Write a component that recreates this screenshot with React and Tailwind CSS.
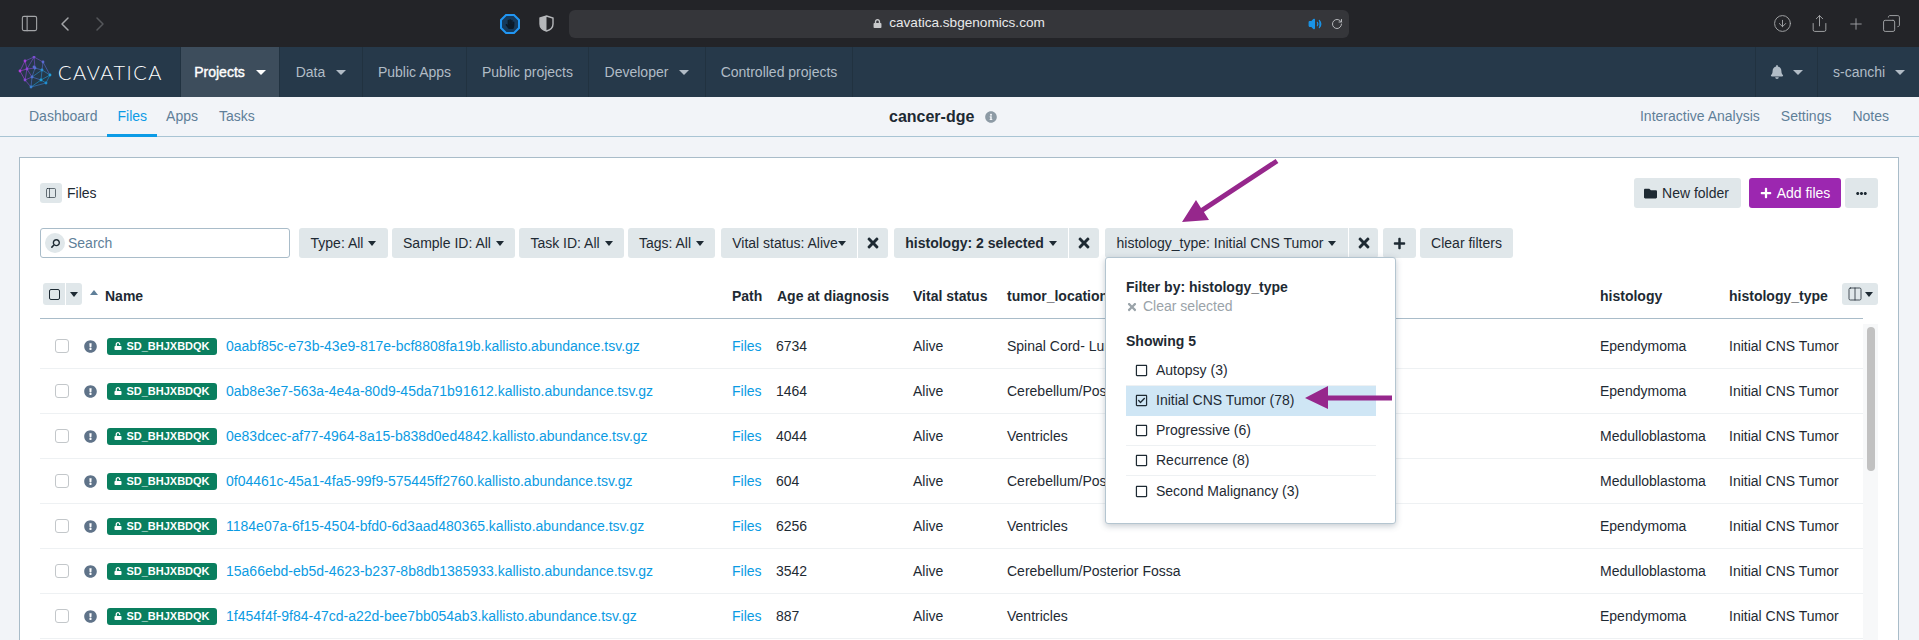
import React from "react";
import {
  FaBell,
  FaEllipsisH,
  FaExclamationCircle,
  FaFolder,
  FaHandPaper,
  FaInfoCircle,
  FaLock,
  FaPlus,
  FaRegCheckSquare,
  FaRegSquare,
  FaSearch,
  FaTimes,
  FaUnlock,
} from "react-icons/fa";
import {
  ChevronLeft,
  ChevronRight,
  CircleArrowDown,
  Columns2,
  Copy,
  PanelLeft,
  Plus,
  RotateCw,
  Share,
  Volume2,
} from "lucide-react";

const rows = [
  ["0aabf85c-e73b-43e9-817e-bcf8808fa19b.kallisto.abundance.tsv.gz", "6734", "Spinal Cord- Lumbar", "Ependymoma"],
  ["0ab8e3e7-563a-4e4a-80d9-45da71b91612.kallisto.abundance.tsv.gz", "1464", "Cerebellum/Posterior Fossa", "Ependymoma"],
  ["0e83dcec-af77-4964-8a15-b838d0ed4842.kallisto.abundance.tsv.gz", "4044", "Ventricles", "Medulloblastoma"],
  ["0f04461c-45a1-4fa5-99f9-575445ff2760.kallisto.abundance.tsv.gz", "604", "Cerebellum/Posterior Fossa", "Medulloblastoma"],
  ["1184e07a-6f15-4504-bfd0-6d3aad480365.kallisto.abundance.tsv.gz", "6256", "Ventricles", "Ependymoma"],
  ["15a66ebd-eb5d-4623-b237-8b8db1385933.kallisto.abundance.tsv.gz", "3542", "Cerebellum/Posterior Fossa", "Medulloblastoma"],
  ["1f454f4f-9f84-47cd-a22d-bee7bb054ab3.kallisto.abundance.tsv.gz", "887", "Ventricles", "Ependymoma"],
];

const filterOptions = [
  ["Autopsy (3)", false],
  ["Initial CNS Tumor (78)", true],
  ["Progressive (6)", false],
  ["Recurrence (8)", false],
  ["Second Malignancy (3)", false],
];

// columns are shared by the header and the rows
const tableCols = "grid grid-cols-[692px_46px_135px_94px_593px_129px_134px]";

function Caret({ className = "border-t-[#1e2a33]" }) {
  return <span className={`inline-block h-0 w-0 border-x-[4px] border-t-[5px] border-x-transparent ${className}`} />;
}

function NavItem({ label, width, caret, active }) {
  return (
    <div
      className={`flex h-full items-center justify-center gap-[11px] border-r border-[#213240] ${
        active ? "bg-[#3d4d5c] text-white [-webkit-text-stroke:0.4px_white]" : "text-[#b1bcc6]"
      } ${width}`}
    >
      <span>{label}</span>
      {caret && (
        <span
          className={`inline-block h-0 w-0 border-x-[5px] border-t-[5px] border-x-transparent ${
            active ? "border-t-white" : "border-t-[#b1bcc6]"
          }`}
        />
      )}
    </div>
  );
}

function FilterButton({ label, width, bold, gap = "gap-[5px]" }) {
  return (
    <div
      className={`flex h-[30px] items-center justify-center rounded-[3px] bg-[#e0e7ea] text-[14px] text-[#1e2a33] ${gap} ${
        bold ? "font-bold" : ""
      } ${width}`}
    >
      <span>{label}</span>
      <Caret />
    </div>
  );
}

function FilterClose({ width = "w-[31px]" }) {
  return (
    <div className={`flex h-[30px] items-center justify-center rounded-r-[3px] border-l border-white bg-[#e0e7ea] text-[#1e2a33] ${width}`}>
      <FaTimes size={16} />
    </div>
  );
}

function CavaticaLogo() {
  const nodes = [
    [16, 1, "#7a4fd0"], [7, 5, "#a33fd8"], [25, 6, "#5a6ad0"], [2, 15, "#b03fdc"], [9, 13, "#8f46d8"],
    [17, 12, "#4f74d0"], [24, 14, "#2d8fd0"], [32, 19, "#1f9ed8"], [7, 24, "#8a4ad8"], [14, 21, "#4f74d0"],
    [23, 24, "#1f9ed8"], [28, 27, "#1f8fd0"], [13, 31, "#3a7fd0"], [16, 11, "#5a6ad0"],
  ];
  const links = [
    [0, 1], [0, 2], [1, 3], [2, 7], [3, 8], [8, 12], [12, 11], [11, 7], [0, 4], [0, 5], [1, 4], [4, 5], [5, 6], [2, 6],
    [6, 7], [3, 4], [4, 9], [5, 9], [9, 10], [6, 10], [10, 11], [8, 9], [9, 12], [10, 12], [4, 8], [6, 9], [10, 7],
  ];
  return (
    <svg width="34" height="33" viewBox="0 0 34 33" className="shrink-0">
      {links.map(([a, b], i) => (
        <line key={i} x1={nodes[a][0]} y1={nodes[a][1]} x2={nodes[b][0]} y2={nodes[b][1]} stroke={nodes[a][2]} strokeWidth="0.6" />
      ))}
      {nodes.map(([x, y, c], i) => (
        <circle key={i} cx={x} cy={y} r="1.4" fill={c} />
      ))}
    </svg>
  );
}

function BrowserBar() {
  return (
    <div className="relative flex h-[47px] items-center bg-[#232428] text-[#a3a5a8]">
      <PanelLeft size={19} strokeWidth={1.4} className="ml-[20px]" />
      <ChevronLeft size={24} strokeWidth={1.5} className="ml-[14px]" />
      <ChevronRight size={24} strokeWidth={1.5} className="ml-[11px] text-[#55575b]" />
      <svg width="20" height="20" viewBox="0 0 20 20" className="ml-[388px]">
        <polygon points="6,1 14,1 19,6 19,14 14,19 6,19 1,14 1,6" fill="#153a5c" stroke="#2196f3" strokeWidth="2" />
      </svg>
      <FaHandPaper size={10} className="-ml-[15px] text-[#0b1a28]" />
      <svg width="15" height="17" viewBox="0 0 15 17" className="ml-[24px]">
        <path d="M7.5 1 L14 3 V9 C14 12.5 11 15 7.5 16 C4 15 1 12.5 1 9 V3 Z" fill="none" stroke="#b5b7ba" strokeWidth="1.4" />
        <path d="M7.5 1 L1 3 V9 C1 12.5 4 15 7.5 16 Z" fill="#b5b7ba" />
      </svg>
      <div className="relative ml-[15px] flex h-[28px] w-[780px] items-center justify-center gap-[7px] rounded-[6px] bg-[#35363a] text-[13.6px] text-[#e8e9ea]">
        <FaLock size={9} className="text-[#c8c9cb]" />
        <span>cavatica.sbgenomics.com</span>
        <div className="absolute right-[6px] flex items-center gap-[9px]">
          <Volume2 size={14} className="text-[#1a94e8]" fill="#1a94e8" />
          <RotateCw size={12} className="text-[#b5b7ba]" />
        </div>
      </div>
      <CircleArrowDown size={19} strokeWidth={1.2} className="ml-[424px]" />
      <Share size={19} strokeWidth={1.2} className="ml-[18px]" />
      <Plus size={18} strokeWidth={1.2} className="ml-[18px]" />
      <Copy size={19} strokeWidth={1.2} className="ml-[17px] -scale-x-100" />
    </div>
  );
}

function MainNav() {
  return (
    <div className="flex h-[50px] items-center bg-[#26394a] text-[14px]">
      <div className="flex h-full w-[181px] items-center border-r border-[#213240] pl-[18px]">
        <CavaticaLogo />
        <span className="ml-[6px] font-['Lato',sans-serif] text-[20px] font-light tracking-[1.5px] text-white">CAVATICA</span>
      </div>
      <NavItem label="Projects" width="w-[99px]" caret active />
      <NavItem label="Data" width="w-[83px]" caret />
      <NavItem label="Public Apps" width="w-[104px]" />
      <NavItem label="Public projects" width="w-[122px]" />
      <NavItem label="Developer" width="w-[117px]" caret />
      <NavItem label="Controlled projects" width="w-[147px]" />
      <div className="ml-auto flex h-full w-[63px] items-center justify-center gap-[9px] border-x border-[#213240] text-[#b1bcc6]">
        <FaBell size={14} />
        <span className="inline-block h-0 w-0 border-x-[5px] border-t-[5px] border-x-transparent border-t-[#b1bcc6]" />
      </div>
      <div className="flex h-full w-[101px] items-center gap-[10px] pl-[15px] text-[#b1bcc6]">
        <span>s-canchi</span>
        <span className="inline-block h-0 w-0 border-x-[5px] border-t-[5px] border-x-transparent border-t-[#b1bcc6]" />
      </div>
    </div>
  );
}

function SubNav() {
  return (
    <div className="relative flex h-[40px] items-center border-b border-[#a9c4d4] text-[14px] text-[#5f7f99]">
      <span className="ml-[29px]">Dashboard</span>
      <span className="relative ml-[20px] flex h-full items-center text-[#0c9be6]">
        Files
        <span className="absolute -bottom-px -left-[11px] h-[3px] w-[50px] bg-[#0c9be6]" />
      </span>
      <span className="ml-[19px]">Apps</span>
      <span className="ml-[21px]">Tasks</span>
      <div className="absolute left-[889px] flex items-center gap-[11px]">
        <span className="text-[16px] font-bold text-[#1e2a33]">cancer-dge</span>
        <FaInfoCircle size={12} className="text-[#8d9aa5]" />
      </div>
      <div className="ml-auto mr-[30px] flex gap-[21px]">
        <span>Interactive Analysis</span>
        <span>Settings</span>
        <span>Notes</span>
      </div>
    </div>
  );
}

function FilterPopover() {
  return (
    <div className="absolute left-0 top-[29px] z-10 h-[267px] w-[291px] rounded-[3px] border border-[#b4c5d0] bg-white px-[20px] pt-[19px] text-[14px] text-[#1e2a33] shadow-[0_2px_6px_rgba(60,80,100,0.3)]">
      <div className="h-[20px] font-bold leading-[20px]">Filter by: histology_type</div>
      <div className="flex h-[19px] items-center gap-[5px] text-[#9aa3a9]">
        <FaTimes size={12} />
        <span>Clear selected</span>
      </div>
      <div className="mt-[15px] h-[20px] font-bold leading-[20px]">Showing 5</div>
      <div className="mt-[5px] w-[250px]">
        {filterOptions.map(([label, checked]) => (
          <div
            key={label}
            className={`flex h-[30px] items-center gap-[8px] border-b pl-[9px] ${
              checked ? "border-[#cfe6f5] bg-[#cfe6f5]" : "border-[#eef1f3] last:border-b-0"
            }`}
          >
            {checked ? <FaRegCheckSquare size={13} /> : <FaRegSquare size={13} />}
            <span>{label}</span>
          </div>
        ))}
      </div>
    </div>
  );
}

function Toolbar() {
  return (
    <>
      <div className="flex h-[30px] items-center">
        <div className="flex h-[20px] w-[22px] items-center justify-center rounded-[3px] bg-[#e0e7ea]">
          <PanelLeft size={12} strokeWidth={1.3} className="text-[#1e2a33]" />
        </div>
        <span className="ml-[5px] text-[14px] text-[#1e2a33]">Files</span>
        <div className="ml-auto flex h-[30px] w-[107px] items-center justify-center gap-[5px] rounded-[3px] bg-[#e0e7ea] pr-[2px] text-[14px] text-[#1e2a33]">
          <FaFolder size={13} />
          <span>New folder</span>
        </div>
        <div className="ml-[8px] flex h-[30px] w-[92px] items-center justify-center gap-[5px] rounded-[3px] bg-[#9c27b0] text-[14px] text-white">
          <FaPlus size={12} />
          <span>Add files</span>
        </div>
        <div className="ml-[4px] flex h-[30px] w-[33px] items-center justify-center rounded-[3px] bg-[#e0e7ea] text-[#1e2a33]">
          <FaEllipsisH size={11} />
        </div>
      </div>
      <div className="mt-[20px] flex h-[30px] items-center">
        <div className="flex h-[30px] w-[250px] items-center rounded-[3px] border border-[#a9bcc9] bg-white pl-[4px]">
          <span className="flex h-[20px] w-[20px] items-center justify-center rounded-full bg-[#e0e7ea]">
            <FaSearch size={9} className="-scale-x-100 text-[#1e2a33]" />
          </span>
          <span className="ml-[3px] text-[14px] text-[#5f7f99]">Search</span>
        </div>
        <div className="ml-[9px] flex gap-[4px]">
          <FilterButton label="Type: All" width="w-[89px]" />
          <FilterButton label="Sample ID: All" width="w-[123px]" />
          <FilterButton label="Task ID: All" width="w-[105px]" />
          <FilterButton label="Tags: All" width="w-[87px]" />
        </div>
        <div className="ml-[6px] flex">
          <FilterButton label="Vital status: Alive" gap="gap-0" width="w-[136px] rounded-r-none" />
          <FilterClose />
        </div>
        <div className="ml-[6px] flex">
          <FilterButton label="histology: 2 selected" width="w-[174px] rounded-r-none" bold />
          <FilterClose />
        </div>
        <div className="relative ml-[6px] flex">
          <FilterButton label="histology_type: Initial CNS Tumor" width="w-[243px] rounded-r-none" />
          <FilterClose width="w-[30px]" />
          <FilterPopover />
        </div>
        <div className="ml-[5px] flex h-[30px] w-[33px] items-center justify-center rounded-[3px] bg-[#e0e7ea] text-[#1e2a33]">
          <FaPlus size={13} />
        </div>
        <div className="ml-[4px] flex h-[30px] w-[93px] items-center justify-center rounded-[3px] bg-[#e0e7ea] text-[14px] text-[#1e2a33]">
          Clear filters
        </div>
      </div>
    </>
  );
}

function TableHeader() {
  return (
    <div className="relative">
      <div className={`${tableCols} h-[61px] w-[1823px] items-end border-b border-[#a9bcc9] pb-[12px] text-[14px] font-bold leading-[20px] text-[#1e2a33]`}>
        <div className="flex items-end">
          <div className="mb-px ml-[3px] flex h-[22px] w-[22px] items-center justify-center rounded-l-[3px] bg-[#e0e7ea]">
            <span className="h-[11px] w-[11px] rounded-[2px] border border-[#1e2a33]" />
          </div>
          <div className="mb-px ml-px flex h-[22px] w-[16px] items-center justify-center rounded-r-[3px] bg-[#e0e7ea]">
            <Caret />
          </div>
          <span className="mb-[11px] ml-[8px] inline-block h-0 w-0 border-x-[4px] border-b-[5px] border-x-transparent border-b-[#5f7f99]" />
          <span className="ml-[7px]">Name</span>
        </div>
        <div>Path</div>
        <div className="-ml-px">Age at diagnosis</div>
        <div>Vital status</div>
        <div>tumor_location</div>
        <div>histology</div>
        <div>histology_type</div>
      </div>
      <div className="absolute right-0 top-[25px] flex h-[22px] w-[36px] items-center justify-center gap-[2px] rounded-[3px] bg-[#e0e7ea] text-[#1e2a33]">
        <Columns2 size={16} strokeWidth={1.2} />
        <Caret />
      </div>
    </div>
  );
}

function FileRow({ file, age, location, histology }) {
  return (
    <div className={`${tableCols} h-[45px] items-center border-b border-[#eef1f3] text-[14px] text-[#1e2a33]`}>
      <div className="flex items-center">
        <span className="ml-[15px] h-[14px] w-[14px] rounded-[3px] border border-[#c3c7ca] bg-white" />
        <FaExclamationCircle size={13} className="ml-[15px] text-[#5f7389]" />
        <span className="ml-[10px] flex h-[17px] w-[110px] items-center justify-center gap-[4px] rounded-[3px] bg-[#0a7f5f] text-[11px] font-bold text-white">
          <FaUnlock size={8} />
          SD_BHJXBDQK
        </span>
        <span className="ml-[9px] text-[#0b9be3]">{file}</span>
      </div>
      <div className="text-[#0b9be3]">Files</div>
      <div className="-ml-[2px]">{age}</div>
      <div>Alive</div>
      <div>{location}</div>
      <div>{histology}</div>
      <div>Initial CNS Tumor</div>
    </div>
  );
}

function Arrows() {
  // the two annotation arrows drawn over the screenshot
  return (
    <svg width="1919" height="640" viewBox="0 0 1919 640" className="pointer-events-none absolute left-0 top-0 z-20">
      <path d="M1275.600 159 L1278.400 163 L1203.900 212 L1209 220 L1182 222 L1196 200 L1201 208 Z" fill="#96278c" />
      <path d="M1305 398 L1328 386 L1328 395.500 L1392 395.500 L1392 400.500 L1328 400.500 L1328 409 Z" fill="#96278c" />
    </svg>
  );
}

export default function App() {
  return (
    <div className="relative h-[640px] overflow-hidden bg-[#f2f4f8] font-['Liberation_Sans',Arial,sans-serif]">
      <BrowserBar />
      <MainNav />
      <SubNav />
      <div className="ml-[19px] mt-[20px] h-[500px] w-[1880px] border-x border-t border-[#a9bcc9] bg-white pl-[20px] pr-[20px] pt-[20px]">
        <Toolbar />
        <TableHeader />
        <div className="flex">
          <div className="w-[1823px] pt-[5px]">
            {rows.map(([file, age, location, histology]) => (
              <FileRow key={file} file={file} age={age} location={location} histology={histology} />
            ))}
          </div>
          <div className="mt-[5px] h-[320px] w-[15px] bg-[#f7f8f9] px-[4px] pt-[3px]">
            <div className="h-[144px] w-[8px] rounded-[4px] bg-[#c1c1c1]" />
          </div>
        </div>
      </div>
      <Arrows />
    </div>
  );
}
